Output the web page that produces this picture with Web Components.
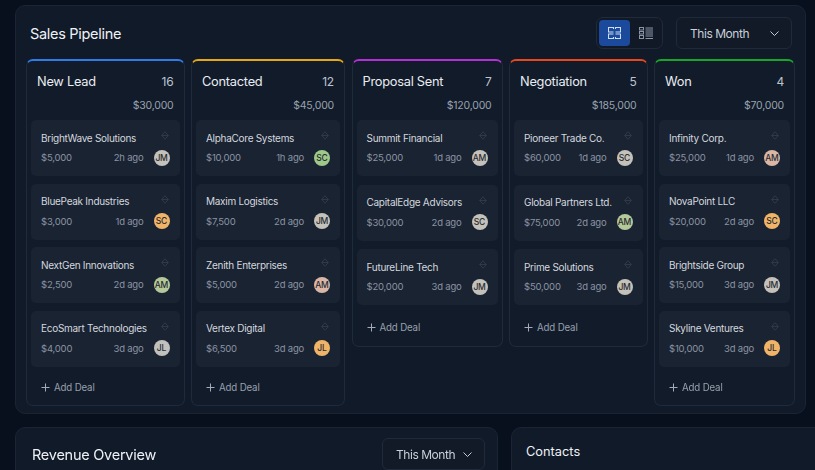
<!DOCTYPE html>
<html><head><meta charset="utf-8"><style>
html,body{margin:0;height:100%;overflow:hidden;background:#08101e;}
body{font-family:Inter,"Liberation Sans",sans-serif;color:#e6ebf2;}
app-shell{display:block;filter:blur(.3px);}
</style></head><body>
<app-shell>
<sales-pipeline>
<pipe-column name="New Lead" count="16" total="$30,000" color="#2f7be8" gap="7.5">
<deal-card t="BrightWave Solutions" v="$5,000" a="2h ago" i="JM" c="#c4c1ba"></deal-card>
<deal-card t="BluePeak Industries" v="$3,000" a="1d ago" i="SC" c="#f0b469"></deal-card>
<deal-card t="NextGen Innovations" v="$2,500" a="2d ago" i="AM" c="#b4c99a"></deal-card>
<deal-card t="EcoSmart Technologies" v="$4,000" a="3d ago" i="JL" c="#c0c1be"></deal-card>
</pipe-column>
<pipe-column name="Contacted" count="12" total="$45,000" color="#e6a80f" gap="7.5">
<deal-card t="AlphaCore Systems" v="$10,000" a="1h ago" i="SC" c="#9dc98a"></deal-card>
<deal-card t="Maxim Logistics" v="$7,500" a="2d ago" i="JM" c="#c4c1ba"></deal-card>
<deal-card t="Zenith Enterprises" v="$5,000" a="2d ago" i="AM" c="#d9b6a6"></deal-card>
<deal-card t="Vertex Digital" v="$6,500" a="3d ago" i="JL" c="#f0b469"></deal-card>
</pipe-column>
<pipe-column name="Proposal Sent" count="7" total="$120,000" color="#b52fd6" gap="8.5" addh="41">
<deal-card t="Summit Financial" v="$25,000" a="1d ago" i="AM" c="#c4c1ba"></deal-card>
<deal-card t="CapitalEdge Advisors" v="$30,000" a="2d ago" i="SC" c="#c4c1ba"></deal-card>
<deal-card t="FutureLine Tech" v="$20,000" a="3d ago" i="JM" c="#c4c1ba"></deal-card>
</pipe-column>
<pipe-column name="Negotiation" count="5" total="$185,000" color="#e8481c" gap="8.5" addh="41">
<deal-card t="Pioneer Trade Co." v="$60,000" a="1d ago" i="SC" c="#c4c1ba"></deal-card>
<deal-card t="Global Partners Ltd." v="$75,000" a="2d ago" i="AM" c="#b4c99a"></deal-card>
<deal-card t="Prime Solutions" v="$50,000" a="3d ago" i="JM" c="#c4c1ba"></deal-card>
</pipe-column>
<pipe-column name="Won" count="4" total="$70,000" color="#18a52c" gap="7.5">
<deal-card t="Infinity Corp." v="$25,000" a="1d ago" i="AM" c="#d9b6a6"></deal-card>
<deal-card t="NovaPoint LLC" v="$20,000" a="2d ago" i="SC" c="#f0b469"></deal-card>
<deal-card t="Brightside Group" v="$15,000" a="3d ago" i="JM" c="#c4c1ba"></deal-card>
<deal-card t="Skyline Ventures" v="$10,000" a="3d ago" i="JL" c="#f0b469"></deal-card>
</pipe-column>
</sales-pipeline>
<bottom-row></bottom-row>
</app-shell>
<script>
function def(name,html){
  customElements.define(name,class extends HTMLElement{
    constructor(){super();this.attachShadow({mode:'open'});}
    connectedCallback(){
      const attr=n=>this.getAttribute(n)||'';
      this.shadowRoot.innerHTML=html(attr);
    }
  });
}
def('month-select',()=>`<style>
:host{display:flex;align-items:center;justify-content:space-between;box-sizing:border-box;width:116px;height:32px;padding:0 12px 0 13px;border:1px solid #1f2a3a;border-radius:6px;background:#121a28;font-size:12px;letter-spacing:-.45px;color:#c9d0da;white-space:nowrap}
svg{display:block}
</style><span>This Month</span><svg width="9" height="5" viewBox="0 0 9 5" fill="none" stroke="#c3cad4" stroke-width="1"><path d="M.5 .5l4 4 4-4"/></svg>`);
def('view-toggle',()=>`<style>
:host{display:flex;box-sizing:border-box;width:67px;height:32px;padding:2px;border:1px solid #1f2a3a;border-radius:7px;background:#111927;}
b{display:flex;align-items:center;justify-content:center;width:31px;height:26px;border-radius:4px}
b.on{background:#1b4a9c}
b+b{flex:1;padding-left:1px}
svg{display:block}
</style><b class="on"><svg width="13" height="12" viewBox="0 0 13 12" fill="none" stroke="#cfdcf2" stroke-width="1.100"><path d="M5.500 2V.5H.5V5h5M7.500 2V.5h5V5h-5M5.500 10v1.500H.5V7h5M7.500 10v1.500h5V7h-5"/></svg></b>
<b><svg width="14" height="12" viewBox="0 0 14 12" fill="none" stroke="#8b95a3" stroke-width="1"><rect x=".5" y=".5" width="4" height="2.500"/><rect x=".5" y="4.500" width="4" height="2.500"/><rect x=".5" y="8.500" width="4" height="3"/><path d="M6.500 1H14M6.500 3H14M6.500 5H14M6.500 7H14M6.500 9H14M6.500 11.500H14"/></svg></b>`);
def('sales-pipeline',()=>`<style>
:host{display:block;box-sizing:border-box;width:791px;height:409px;margin:5px 0 0 15px;padding:11px 10px 0 10px;border:1px solid #1a2433;border-radius:10px;background:#111a28;}
header{display:flex;align-items:center;height:32px;margin-bottom:10px;padding-left:4px;padding-right:3px}
h2{margin:0;font-size:14.500px;letter-spacing:-.3px;font-weight:400;color:#eef2f6;flex:1}
month-select{margin-left:13px}
.cols{display:grid;grid-template-columns:158.500px 154px 151px 138.500px 141px;column-gap:6.500px;align-items:start;}
</style><header><h2>Sales Pipeline</h2><view-toggle></view-toggle><month-select></month-select></header><div class="cols"><slot></slot></div>`);
def('pipe-column',a=>`<style>
:host{display:block;box-sizing:border-box;border:1px solid #1f2a3a;border-top:2px solid ${a('color')};border-radius:7px;padding:13px 4px 0 4px;background:#121b29;}
.h{display:flex;justify-content:space-between;padding:0 6px;font-size:12.800px;letter-spacing:-.25px;line-height:16px;color:#e9edf2}
.h span+span{font-size:12px;letter-spacing:-.2px;color:#bcc4cf}
.t{text-align:right;padding-right:6px;margin-top:9px;margin-bottom:7px;font-size:10.500px;letter-spacing:-.2px;line-height:14px;color:#98a2af}
.c{display:flex;flex-direction:column;gap:${a('gap')}px}
.add{box-sizing:border-box;display:flex;align-items:center;gap:4px;height:${a('addh')||38}px;padding:3px 0 0 10px;font-size:9.700px;letter-spacing:-.15px;color:#97a0ad}
svg{display:block}
</style><div class="h"><span>${a('name')}</span><span>${a('count')}</span></div><div class="t">${a('total')}</div><div class="c"><slot></slot></div><div class="add"><svg width="9" height="9" viewBox="0 0 9 9" stroke="#a3acb8" stroke-width="1"><path d="M4.500 .5v8M.5 4.500h8"/></svg><span>Add Deal</span></div>`);
def('deal-card',a=>`<style>
:host{display:block;box-sizing:border-box;height:56px;padding:10px 10px 0 10px;border-radius:5px;background:#1a2332;}
.r{display:flex;align-items:center;justify-content:space-between}
.n{font-size:10px;letter-spacing:-.28px;line-height:14px;color:#d3d8df;white-space:nowrap;margin-top:.5px}
svg{display:block;margin-right:1px;margin-top:-3px}
.m{margin-top:4px;height:18px;font-size:9.500px;letter-spacing:-.2px;color:#8a94a2}
.m i{font-style:normal;margin-left:auto;margin-right:10px}
.av{width:16px;height:16px;border-radius:50%;display:flex;align-items:center;justify-content:center;background:${a('c')};color:#2a2c30;font-size:8.500px;font-weight:500;letter-spacing:-.2px}
</style><div class="r"><span class="n">${a('t')}</span><svg width="8" height="9" viewBox="0 0 8 9" fill="none" stroke="#303a47" stroke-width="1"><path d="M4 .7L7.300 4.500 4 8.300 .7 4.500zM.7 4.500H7.300"/></svg></div><div class="r m"><span>${a('v')}</span><i>${a('a')}</i><span class="av">${a('i')}</span></div>`);
def('bottom-row',()=>`<style>
:host{display:flex;margin:13px 0 0 15px;gap:13px;align-items:stretch}
section{box-sizing:border-box;height:60px;border:1px solid #1a2433;border-radius:10px;background:#111a28;flex:none}
.a{width:483px;padding:10px 12px 0 16px;display:flex;justify-content:space-between;align-items:flex-start}
.b{width:320px;padding:16px 14px}
h3{margin:0;font-weight:400;color:#eef2f6}
.a h3{font-size:14.500px;letter-spacing:-.25px;line-height:32px;margin-top:1px}
.b h3{font-size:12.800px;line-height:16px}
</style><section class="a"><h3>Revenue Overview</h3><month-select style="width:103px"></month-select></section><section class="b"><h3>Contacts</h3></section>`);
</script>
</body></html>
